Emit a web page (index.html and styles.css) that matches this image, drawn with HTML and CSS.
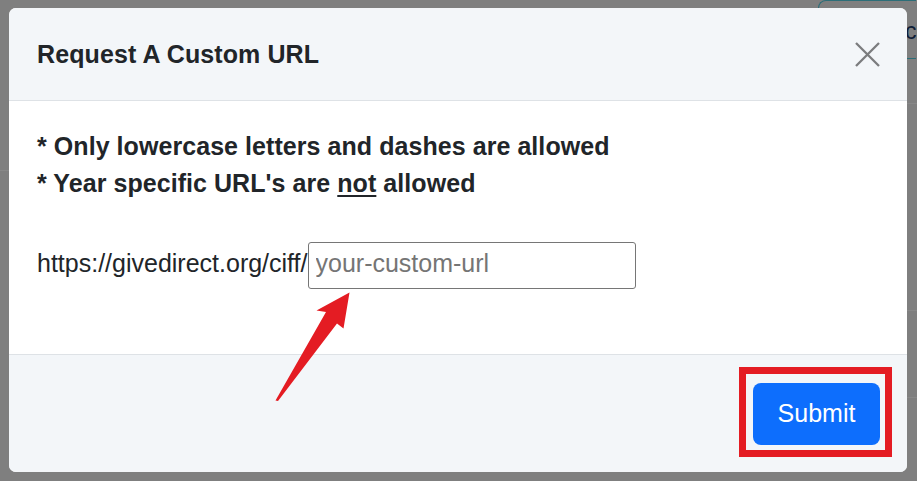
FILE: index.html
```html
<!DOCTYPE html>
<html lang="en">
<head>
<meta charset="utf-8">
<title>Request A Custom URL</title>
<link rel="stylesheet" href="styles.css">
</head>
<body>
  <div class="backdrop">
    <div class="bg-line bg-line-left"></div>
    <div class="bg-line bg-line-r1"></div>
    <div class="bg-line bg-line-r2"></div>
    <div class="bg-line bg-line-r3"></div>
    <div class="bg-button"><span class="bg-button-text">c</span></div>
  </div>

  <div class="modal">
    <div class="modal-header">
      <h5 class="modal-title">Request A Custom URL</h5>
      <button class="btn-close" aria-label="Close">
        <svg width="25" height="25" viewBox="0 0 25 25">
          <path d="M1 1 L24 24 M24 1 L1 24" stroke="#7b7c7e" stroke-width="2.3" fill="none"/>
        </svg>
      </button>
    </div>
    <div class="modal-body">
      <div class="rules">
        <p>* Only lowercase letters and dashes are allowed</p>
        <p>* Year specific URL's are <u>not</u> allowed</p>
      </div>
      <div class="url-row">
        <span class="url-prefix">https://givedirect.org/ciff/</span>
        <input class="url-input" type="text" placeholder="your-custom-url">
      </div>
    </div>
    <div class="modal-footer">
      <button class="btn-submit">Submit</button>
    </div>
  </div>

  <div class="highlight-box"></div>
  <svg class="arrow" width="917" height="481" viewBox="0 0 917 481">
    <polygon points="275.5,400.5 326,312 316.5,310.5 349.5,292.5 343.5,328.5 337,323.5 278,401" fill="#e41c23"/>
  </svg>
</body>
</html>
```

FILE: styles.css
```css
html, body {
  margin: 0;
  padding: 0;
}

body {
  width: 917px;
  height: 481px;
  overflow: hidden;
  background: #7f7f7f;
  font-family: "Liberation Sans", Arial, Helvetica, sans-serif;
  color: #212529;
  position: relative;
}

.backdrop {
  position: absolute;
  inset: 0;
  z-index: 0;
  overflow: hidden;
}

.bg-line {
  position: absolute;
  height: 1px;
  background: #888888;
}

.bg-line-left {
  left: 0;
  top: 170px;
  width: 40px;
}

.bg-line-r1 { right: 0; top: 103px; width: 30px; }
.bg-line-r2 { right: 0; top: 310px; width: 30px; }
.bg-line-r3 { right: 0; top: 397px; width: 30px; }

.bg-button {
  position: absolute;
  left: 818px;
  top: 0;
  width: 98px;
  height: 59px;
  box-sizing: border-box;
  border: 1px solid #2c6e78;
  border-right: 0;
  border-radius: 8px 0 0 8px;
  padding: 17px 0 0 86px;
  font-size: 23px;
  line-height: 26px;
  color: #0f1d36;
}

.bg-button-text {
  display: inline-block;
}

.modal {
  position: relative;
  z-index: 1;
  margin: 8px 0 0 9px;
  width: 898px;
  height: 464px;
  background: #ffffff;
  border-radius: 7px;
  overflow: hidden;
  display: flex;
  flex-direction: column;
}

.modal-header {
  height: 93px;
  box-sizing: border-box;
  flex: none;
  background: #f3f6f9;
  border-bottom: 1px solid #dee2e6;
  padding: 0 27px 0 28px;
  display: flex;
  align-items: center;
  justify-content: space-between;
}

.modal-title {
  margin: 0;
  font-size: 25px;
  font-weight: bold;
  line-height: 30px;
  letter-spacing: 0.1px;
  color: #212529;
}

.btn-close {
  border: 0;
  background: transparent;
  padding: 0;
  width: 25px;
  height: 25px;
  display: block;
}

.btn-close svg {
  display: block;
}

.modal-body {
  height: 253px;
  box-sizing: border-box;
  flex: none;
  padding: 27px 28px 0 28px;
  font-size: 25px;
}

.rules p {
  margin: 0;
  font-weight: bold;
  line-height: 37px;
  letter-spacing: 0.06px;
}

.rules u {
  text-decoration-thickness: 2px;
  text-underline-offset: 3px;
}

.url-row {
  margin-top: 40px;
  display: flex;
  align-items: baseline;
}

.url-prefix {
  font-size: 25px;
}

.url-input {
  width: 328px;
  height: 47px;
  box-sizing: border-box;
  border: 1px solid #767676;
  border-radius: 3px;
  padding: 3px 7px 7px 7px;
  margin: 0;
  font-family: "Liberation Sans", Arial, Helvetica, sans-serif;
  font-size: 25px;
  color: #212529;
  background: #fff;
  outline: none;
}

.url-input::placeholder {
  color: #757575;
}

.modal-footer {
  flex: 1;
  background: #f3f6f9;
  border-top: 1px solid #dee2e6;
  display: flex;
  justify-content: flex-end;
  align-items: center;
  padding-right: 27px;
}

.btn-submit {
  width: 127px;
  height: 62px;
  border: 0;
  border-radius: 8px;
  background: #0d6efd;
  color: #ffffff;
  font-family: "Liberation Sans", Arial, Helvetica, sans-serif;
  font-size: 25px;
  padding: 0;
}

.highlight-box {
  position: absolute;
  z-index: 2;
  left: 739px;
  top: 367px;
  width: 153px;
  height: 90px;
  box-sizing: border-box;
  border: 7px solid #e41c23;
}

.arrow {
  position: absolute;
  z-index: 2;
  left: 0;
  top: 0;
  pointer-events: none;
}
```
